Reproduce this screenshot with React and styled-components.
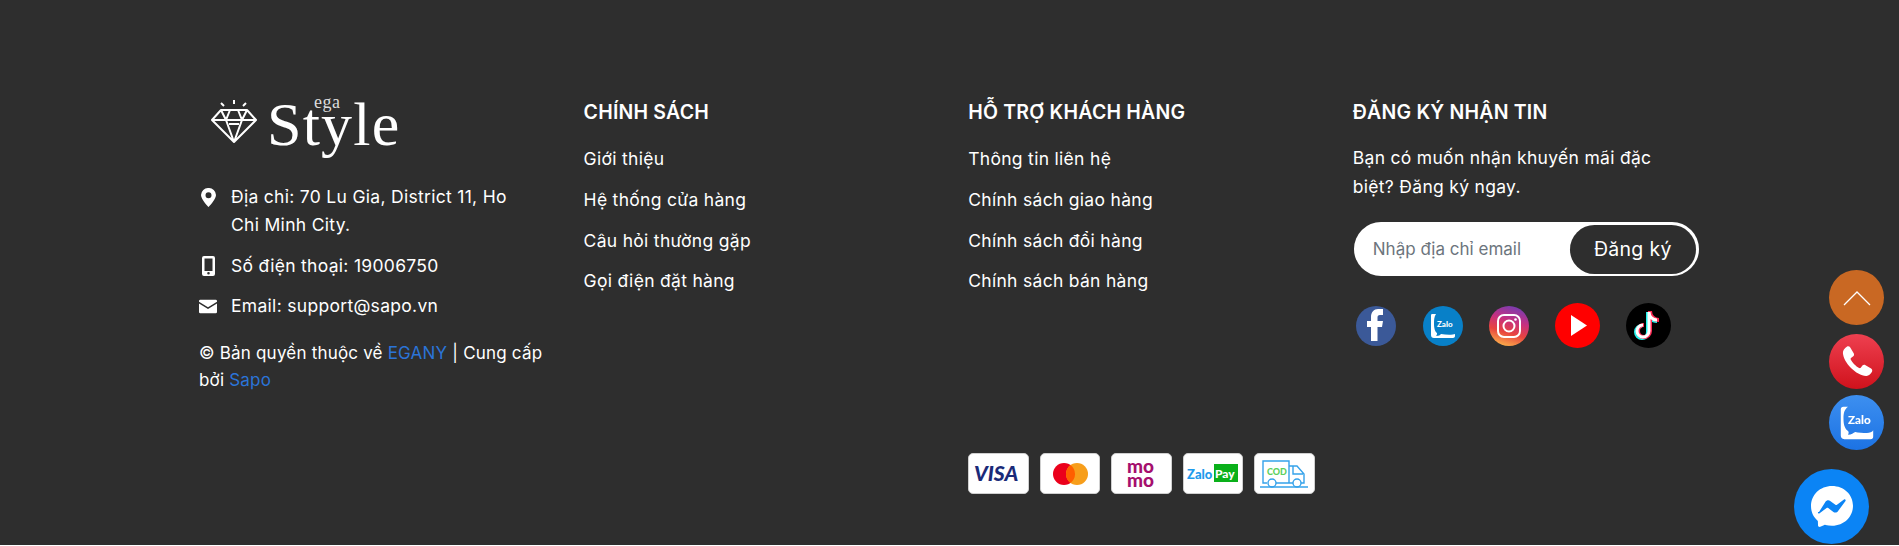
import React from 'react';
import styled, { createGlobalStyle } from 'styled-components';

const Global = createGlobalStyle`
  html, body { margin: 0; padding: 0; background: #fff; }
  body { font-family: "Inter", "Noto Sans", sans-serif; color: #fff; font-size: 17.5px; letter-spacing: 0.3px; overflow: hidden; }
  * { box-sizing: border-box; }
`;
const Footer = styled.footer`
  background: #2e2e2e; height: 545px; padding: 97px 0 0 199px;
  display: grid; grid-template-columns: repeat(4, 384.6px);
`;
const Col = styled.div`padding-right: 30px; display: flex; flex-direction: column;`;
const Logo = styled.div`height: 76px; margin: -1px 0 11px 11px; display: flex; align-items: flex-start; position: relative;`;
const LogoWord = styled.span`
  font-family: "Liberation Serif", serif; font-size: 62px; line-height: 57px; margin: 0 0 0 9px; letter-spacing: 1.2px; color: #fff; position: relative; font-weight: 400;
`;
const LogoSmall = styled.span`
  position: absolute; left: 47px; top: -4px; font-size: 18px; line-height: 20px; letter-spacing: 0.5px; color: #ddd;
`;
const Contact = styled.div`display: flex; gap: 14px; line-height: 28px; margin-bottom: 12.5px; padding-right: 16px;`;
const CIcon = styled.span`width: 18px; flex: none; height: 28px; display: flex; align-items: center; justify-content: center;`;
const Copy = styled.div`line-height: 27.5px; margin-top: 7px; font-size: 17px; letter-spacing: 0.2px;`;
const Link = styled.a`color: #2b74d8;`;
const Title = styled.h4`margin: 0 0 18px; font-size: 19.5px; font-weight: 600; line-height: 30px; letter-spacing: 0.2px; color: #fff;`;
const NavLink = styled.div`line-height: 28px; margin-bottom: 12.8px;`;
const Para = styled.div`line-height: 28.5px; margin-top: -1px; width: 340px;`;
const Form = styled.div`
  margin-top: 21px; width: 345px; height: 54px; border-radius: 27px; background: #fff; margin-left: 1px;
  display: flex; align-items: center; justify-content: space-between; padding: 0 3px 0 19px;
`;
const Placeholder = styled.span`color: #6c757d; font-size: 17px; letter-spacing: 0;`;
const Btn = styled.span`width: 126px; height: 49px; border-radius: 25px; background: #2e2e2e; color: #fff; display: flex; align-items: center; justify-content: center; font-size: 19.5px;`;
const Socials = styled.div`display: flex; align-items: center; margin: 27px 0 0 3px;`;
const Social = styled.svg`flex: none; display: block; margin-right: ${p => p.$mr}px;`;
const Pays = styled.div`position: absolute; left: 968px; top: 453px; display: flex; gap: 11px;`;
const Pay = styled.div`width: 60.5px; height: 41px; border-radius: 5px; background: #fff; border: 1px solid #cfcfcf; display: flex; align-items: center; justify-content: center;`;
const Float = styled.div`
  position: fixed; left: ${p => p.$x}px; top: ${p => p.$y}px; width: ${p => p.$s}px; height: ${p => p.$s}px; border-radius: 50%;
  background: ${p => p.$bg}; display: flex; align-items: center; justify-content: center;
`;
const BrandText = styled.text`font-family: "Lato", sans-serif; font-weight: 900; letter-spacing: 0; fill: ${p => p.$fill || '#fff'};`;

const ZaloGlyph = ({ size, fill = '#fff' }) => (
  <svg width={size} height={size} viewBox="0 0 40 40">
    <path d="M5 2h5C6 5 5 9 5 15c0 6 1 11 5 14 1 1 1 2 0 4 4 0 6-2 8-3 3 1 9 1 13 1 3 0 6-1 7-3v7c0 2-1 3-3 3H6c-3 0-4-2-4-4V5c0-2 1-3 3-3z" fill={fill} />
    <BrandText x="10" y="21" fontSize="13" $fill={fill}>Zalo</BrandText>
  </svg>
);

export default function App() {
  return (
    <>
      <Global />
      <Footer>
        <Col>
          <Logo>
            <svg width="48" height="50" viewBox="0 0 48 50" fill="none" stroke="#fff" strokeWidth="2" style={{ marginTop: 3 }}>
              <path d="M14 7l-3-3M24 5V1M33 7l3-3" />
              <path d="M11 11h26l9 10-22 22L2 21zM2 21h44M16 21l8 22 8-22M11 11l5 10M37 11l-5 10M16 21l4-10M32 21l-4-10M19 25h10" strokeLinejoin="round" />
            </svg>
            <LogoWord>Style<LogoSmall>ega</LogoSmall></LogoWord>
          </Logo>
          <Contact>
            <CIcon><svg width="15" height="19" viewBox="0 0 15 19"><path fillRule="evenodd" fill="#fff" d="M7.5 0A7.2 7.2 0 0 0 0 7c0 4.6 7.5 12 7.5 12S15 11.600 15 7a7.200 7.200 0 0 0-7.500-7zm0 4.200a3 3 0 1 1 0 6 3 3 0 0 1 0-6z" /></svg></CIcon>
            <div>Địa chỉ: 70 Lu Gia, District 11, Ho Chi Minh City.</div>
          </Contact>
          <Contact>
            <CIcon><svg width="13" height="20" viewBox="0 0 13 20"><path fillRule="evenodd" fill="#fff" d="M2 0h9a2 2 0 0 1 2 2v16a2 2 0 0 1-2 2H2a2 2 0 0 1-2-2V2a2 2 0 0 1 2-2zm.5 2.500v12.500h8V2.500zm4 13.500a1.300 1.300 0 1 0 0 2.600 1.300 1.300 0 0 0 0-2.600z" /></svg></CIcon>
            <div>Số điện thoại: 19006750</div>
          </Contact>
          <Contact>
            <CIcon><svg width="20" height="15" viewBox="0 0 20 15"><path fill="#fff" d="M1.500 0h17A1.500 1.500 0 0 1 20 1.500v.8l-10 6-10-6v-.8A1.500 1.500 0 0 1 1.500 0zM0 4.200l10 6 10-6v9.300a1.500 1.500 0 0 1-1.500 1.500h-17A1.500 1.500 0 0 1 0 13.500z" /></svg></CIcon>
            <div>Email: support@sapo.vn</div>
          </Contact>
          <Copy>© Bản quyền thuộc về <Link>EGANY</Link> | Cung cấp bởi <Link>Sapo</Link></Copy>
        </Col>
        <Col>
          <Title>CHÍNH SÁCH</Title>
          {['Giới thiệu', 'Hệ thống cửa hàng', 'Câu hỏi thường gặp', 'Gọi điện đặt hàng'].map(t => <NavLink key={t}>{t}</NavLink>)}
        </Col>
        <Col>
          <Title>HỖ TRỢ KHÁCH HÀNG</Title>
          {['Thông tin liên hệ', 'Chính sách giao hàng', 'Chính sách đổi hàng', 'Chính sách bán hàng'].map(t => <NavLink key={t}>{t}</NavLink>)}
        </Col>
        <Col>
          <Title>ĐĂNG KÝ NHẬN TIN</Title>
          <Para>Bạn có muốn nhận khuyến mãi đặc biệt? Đăng ký ngay.</Para>
          <Form><Placeholder>Nhập địa chỉ email</Placeholder><Btn>Đăng ký</Btn></Form>
          <Socials>
            <Social $mr={27} width="40" height="40" viewBox="0 0 40 40">
              <circle cx="20" cy="20" r="20" fill="#3b5998" />
              <path fill="#fff" d="M15 35V21h-4v-6h4v-4c0-5 3-8 7-8h5v6h-3c-2 0-2.500 1-2.500 2.500V15H27l-1 6h-4.500v14z" />
            </Social>
            <Social $mr={26} width="40" height="40" viewBox="0 0 40 40">
              <circle cx="20" cy="20" r="20" fill="#0880c8" />
              <path fill="#fff" d="M9 8h4c-2 3-2 6-2 10s1 8 3 9c0 1 0 2-1 3 3 0 4-1 5-2 5 1 12 1 14 0v2c0 1-1 2-2 2H11c-2 0-3-1-3-3V10c0-1 0-2 1-2z" />
              <BrandText x="14" y="21" fontSize="8">Zalo</BrandText>
            </Social>
            <Social $mr={26} width="40" height="40" viewBox="0 0 40 40">
              <defs>
                <linearGradient id="ig" x1="0.3" y1="1" x2="0.6" y2="0">
                  <stop offset="0" stopColor="#fdb44b" /><stop offset="0.35" stopColor="#e8443f" /><stop offset="0.65" stopColor="#c7307f" /><stop offset="1" stopColor="#7a3cb0" />
                </linearGradient>
              </defs>
              <circle cx="20" cy="20" r="20" fill="url(#ig)" />
              <rect x="9" y="9" width="22" height="22" rx="6" fill="none" stroke="#fff" strokeWidth="2" />
              <circle cx="20" cy="20" r="5.500" fill="none" stroke="#fff" strokeWidth="2" />
              <circle cx="26.500" cy="13.500" r="1.300" fill="#fff" />
            </Social>
            <Social $mr={26} width="45" height="45" viewBox="0 0 45 45">
              <circle cx="22.500" cy="22.500" r="22.500" fill="#f00" />
              <path fill="#fff" d="M16 12l16 10.500L16 33z" />
            </Social>
            <Social $mr={0} width="45" height="45" viewBox="0 0 45 45">
              <circle cx="22.500" cy="22.500" r="22.500" fill="#000" />
              <path fill="none" stroke="#25f4ee" strokeWidth="4" d="M23 8v20a6 6 0 1 1-6-6M23 8c0 5 4 9 9 9" transform="translate(-1 1)" />
              <path fill="none" stroke="#fe2c55" strokeWidth="4" d="M23 8v20a6 6 0 1 1-6-6M23 8c0 5 4 9 9 9" transform="translate(1 0)" />
              <path fill="none" stroke="#fff" strokeWidth="3" d="M23 9v19a6 6 0 1 1-6-6M23 9c0 5 4 8 8 8" />
            </Social>
          </Socials>
        </Col>
        <Pays>
          <Pay><svg width="50" height="26" viewBox="0 0 50 26"><BrandText x="1" y="20" fontSize="21" $fill="#1a2a78" fontStyle="italic">VISA</BrandText></svg></Pay>
          <Pay><svg width="36" height="24" viewBox="0 0 36 24"><circle cx="12" cy="12" r="11" fill="#eb001b" /><circle cx="25" cy="12" r="11" fill="#f79e1b" /><path fill="#ff5f00" d="M18.500 3.100a11 11 0 0 1 0 17.800 11 11 0 0 1 0-17.800z" /></svg></Pay>
          <Pay><svg width="30" height="36" viewBox="0 0 30 36"><BrandText x="1" y="17" fontSize="19" $fill="#a50f6e">mo</BrandText><BrandText x="1" y="31" fontSize="19" $fill="#a50f6e">mo</BrandText></svg></Pay>
          <Pay><svg width="52" height="22" viewBox="0 0 52 22"><rect x="27" y="1" width="24" height="18" fill="#0ab01a" /><BrandText x="0" y="16" fontSize="13" $fill="#1e9bec">Zalo</BrandText><BrandText x="28" y="15" fontSize="12" $fill="#fff">Pay</BrandText></svg></Pay>
          <Pay>
            <svg width="50" height="30" viewBox="0 0 50 30" fill="none" stroke="#35a2ea" strokeWidth="1.400">
              <path d="M8 24H4V2h26v22H17M30 7h8l7 8v9h-3M30 24h4M1 28h48M34 7v8h10" />
              <circle cx="13" cy="24" r="4" /><circle cx="38" cy="24" r="4" />
              <BrandText x="8" y="16" fontSize="9" $fill="#5cd05c" stroke="none">COD</BrandText>
            </svg>
          </Pay>
        </Pays>
      </Footer>
      <Float $x={1829} $y={270} $s={55} $bg="#c96823">
        <svg width="28" height="16" viewBox="0 0 28 16" fill="none" stroke="#fff" strokeWidth="1.300" style={{ marginTop: 1 }}><path d="M1 15L14 2l13 13" /></svg>
      </Float>
      <Float $x={1829} $y={334} $s={55} $bg="linear-gradient(#ee4050,#d0121c)">
        <svg width="36" height="36" viewBox="0 0 24 24"><path fill="#fff" d="M5.200 1.800c.8-.5 1.800-.3 2.300.5l2.300 3.800c.4.700.3 1.600-.3 2.100L8 9.300c-.3.300-.4.700-.2 1 .9 1.800 3.500 4.600 5.600 5.700.4.200.8.100 1.100-.2l1.100-1.400c.5-.6 1.400-.7 2.100-.3l3.700 2.300c.8.500 1 1.500.5 2.300-1 1.600-2.100 2.700-3.800 2.600C11.500 21 3 12.500 2.600 6c-.1-1.700 1.100-3.200 2.600-4.200z" /></svg>
      </Float>
      <Float $x={1829} $y={395} $s={55} $bg="linear-gradient(#3d8ff0,#1c73e4)">
        <ZaloGlyph size={36} />
      </Float>
      <Float $x={1794} $y={469} $s={75} $bg="#0b84f5">
        <svg width="44" height="44" viewBox="0 0 44 44"><path fill="#fff" d="M22 1C10 1 1 9.800 1 21c0 5.900 2.400 11 6.400 14.500.3.300.5.700.5 1.100l.1 3.700c0 1.200 1.200 1.900 2.300 1.500l4.100-1.800c.4-.2.700-.2 1.100-.1 2 .5 4.200.8 6.500.8 12 0 21-8.800 21-20S34 1 22 1z" /><path fill="#0b84f5" d="M9 27l6.500-10.200c1-1.600 3.200-2 4.700-.9l5.200 3.900c.5.300 1.100.3 1.600 0l7-5.300c.9-.7 2.200.4 1.500 1.400L28.100 26c-1 1.600-3.200 2-4.700.9l-5.200-3.900c-.5-.3-1.100-.3-1.600 0l-7 5.300c-.9.700-2.200-.4-1.500-1.400z" /></svg>
      </Float>
    </>
  );
}
